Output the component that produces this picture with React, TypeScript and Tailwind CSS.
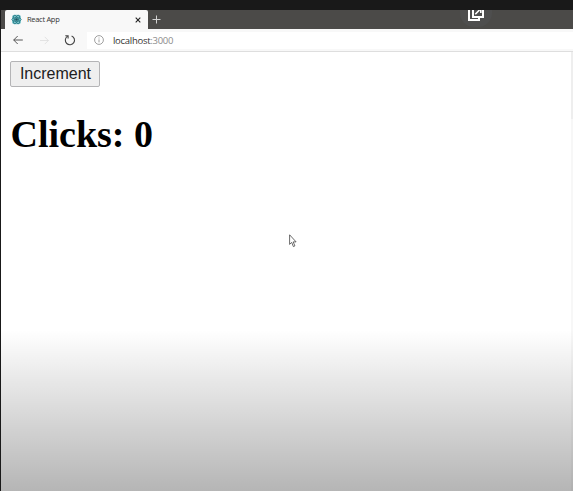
import React from "react";

function ReactLogo() {
  return (
    <svg className="ml-[6px] size-[11px] shrink-0" viewBox="0 0 11 11" fill="none">
      <rect x="1" y="0.8" width="9" height="9.4" rx="2.6" fill="#7cc3ca" />
      <g stroke="#2b7d88" strokeWidth="0.8">
        <ellipse cx="5.5" cy="5.5" rx="4.8" ry="1.9" />
        <ellipse cx="5.5" cy="5.5" rx="4.8" ry="1.9" transform="rotate(60 5.5 5.5)" />
        <ellipse cx="5.5" cy="5.5" rx="4.8" ry="1.9" transform="rotate(120 5.5 5.5)" />
      </g>
      <circle cx="5.5" cy="5.5" r="1.3" fill="#1b5560" />
    </svg>
  );
}

function TabStrip() {
  return (
    <div className="flex h-[19px] shrink-0 bg-[#4b4a48] pl-1">
      <div className="flex w-[143px] items-center rounded-t-[2px] bg-[#f8f8f8]">
        <ReactLogo />
        <span className="ml-[5px] w-[36px] whitespace-nowrap font-['Open_Sans',sans-serif] text-[7.5px] leading-none tracking-[-0.3px] text-[#333]">
          React App
        </span>
        <svg className="ml-[72px] size-[6px]" viewBox="0 0 6 6" stroke="#222" strokeWidth="1.1">
          <path d="M0.7 0.7 5.3 5.3M5.3 0.7 0.7 5.3" />
        </svg>
      </div>
      <svg className="mt-[5px] ml-[4px] size-[9px]" viewBox="0 0 9 9" stroke="#d2d2d2">
        <path d="M4.5 0.5v8M0.5 4.5h8" />
      </svg>
      <div className="ml-[299px] h-[17px] w-[32px] rounded-b-[14px] bg-[#4e4e4e]">
        <svg className="ml-[8px] h-[11px] w-[16px]" viewBox="0 0 16 11" fill="none" stroke="#fff">
          <path d="M1 0v10h10V7M5 0v7h10V0" strokeWidth="2" />
          <path d="M7.3 4.2 11.5 0M12.8 0v3" strokeWidth="1.6" />
        </svg>
      </div>
    </div>
  );
}

function Toolbar() {
  return (
    <div className="flex h-[23px] shrink-0 items-center border-b border-[#dedede] bg-[#f8f8f8] pl-[12px]">
      <svg className="h-[10px] w-[10px]" viewBox="0 0 10 10" fill="none" stroke="#444" strokeWidth="0.9">
        <path d="M9.8 5H0.7M4.7 1 0.7 5l4 4" />
      </svg>
      <svg className="ml-[17px] size-[9px]" viewBox="0 0 10 10" fill="none" stroke="#dedede" strokeWidth="0.9">
        <path d="M0 5h9.3M5.3 1l4 4-4 4" />
      </svg>
      <svg className="ml-[15px] size-[12px]" viewBox="0 0 12 12" fill="none" stroke="#444" strokeWidth="1.1">
        <path d="M7.6 1.9a4.6 4.6 0 1 1-4.3.5M4.1 4.5V1.7H1.3" />
      </svg>
      <div className="ml-[11px] flex h-[17px] flex-1 items-center bg-white pl-[7px]">
        <svg className="size-[10px]" viewBox="0 0 10 10" fill="none" stroke="#888" strokeWidth="0.8">
          <circle cx="5" cy="5" r="4.4" />
          <path d="M5 4.4v3M5 2.5v1" />
        </svg>
        <span className="mt-px ml-[9px] font-['Open_Sans',sans-serif] text-[9.5px] leading-none tracking-[-0.28px] text-[#333]">
          localhost<span className="text-[#8c8c8c]">:3000</span>
        </span>
      </div>
    </div>
  );
}

export default function App() {
  return (
    <div className="relative flex h-[491px] w-[573px] flex-col overflow-hidden border-t-[10px] border-l border-[#191919] bg-white">
      <TabStrip />
      <Toolbar />
      <main className="flex min-h-0 flex-1 justify-between">
        <div className="flex flex-col items-start pt-[9px] pl-[9px]">
          <button className="h-[26px] w-[90px] rounded-[2px] border border-[#b4b4b6] bg-[#efefef] pb-px pl-px font-['Liberation_Sans',Arial,sans-serif] text-[16px] leading-none text-[#202020]">
            Increment
          </button>
          <h1 className="mt-[25px] pl-[0.5px] whitespace-nowrap font-['Liberation_Serif',serif] text-[38px] leading-[44px] font-bold text-black">
            Clicks: 0
          </h1>
        </div>
        <div className="flex w-[2px] flex-col bg-[#f7f7f7]">
          <div className="h-[67px] bg-[#eeeeee]" />
        </div>
      </main>
      <svg className="absolute top-[224px] left-[288px] h-[14px] w-[8px]" viewBox="0 0 8 14" fill="#fff" stroke="#444" strokeWidth="0.8">
        <path d="M0.6 0.8v9.6l2.1-2 1.7 4.2 1.5-.7-1.7-4h2.9Z" />
      </svg>
      <div className="pointer-events-none absolute inset-x-0 bottom-0 h-[161px] bg-linear-to-b from-black/0 to-black/29" />
    </div>
  );
}
